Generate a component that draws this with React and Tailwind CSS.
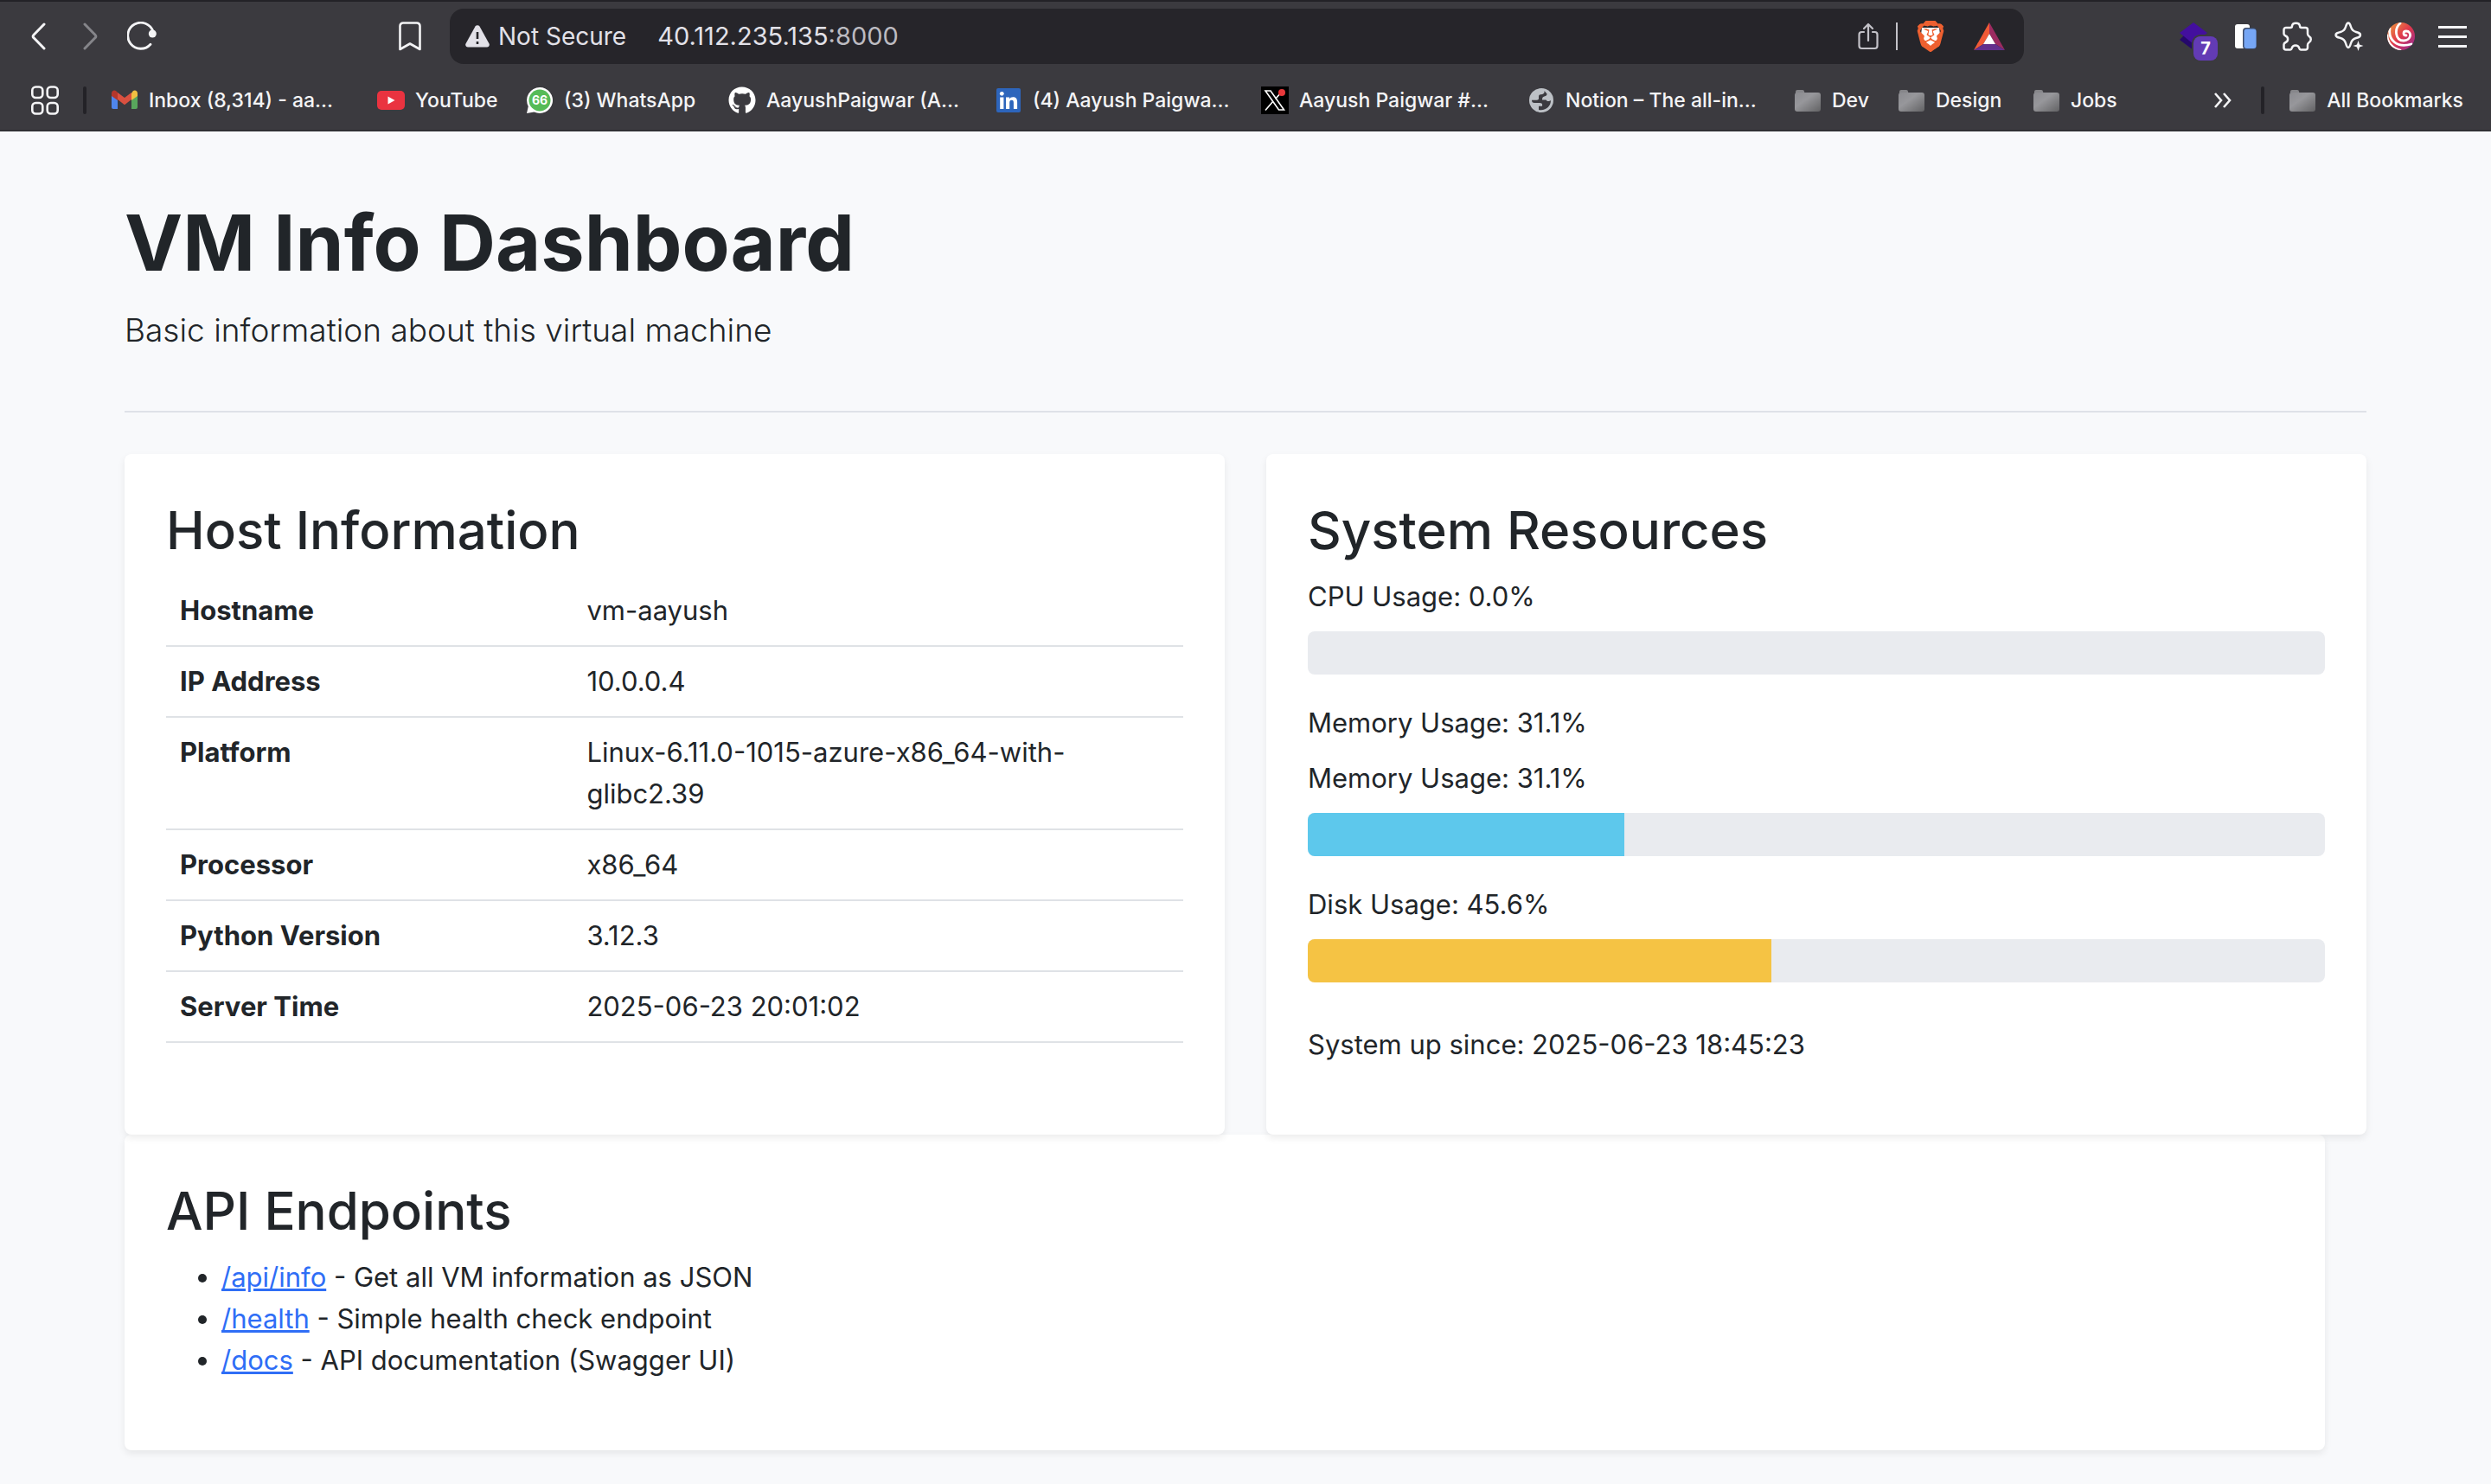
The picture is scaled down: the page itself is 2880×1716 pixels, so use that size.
import { FaGithub } from "react-icons/fa";
import { SiBrave } from "react-icons/si";

const bookmarks = [
  { label: "Inbox (8,314) - aa...", icon: GmailIcon, width: "w-[308px]" },
  { label: "YouTube", icon: YouTubeIcon, width: "w-[172px]" },
  { label: "(3) WhatsApp", icon: WhatsAppIcon, width: "w-[234px]" },
  { label: "AayushPaigwar (A...", icon: GithubIcon, width: "w-[308px]" },
  { label: "(4) Aayush Paigwa...", icon: LinkedInIcon, width: "w-[308px]" },
  { label: "Aayush Paigwar #...", icon: XIcon, width: "w-[308px]" },
  { label: "Notion – The all-in...", icon: GlobeIcon, width: "w-[308px]" },
  { label: "Dev", icon: FolderIcon, width: "w-[120px]" },
  { label: "Design", icon: FolderIcon, width: "w-[156px]" },
  { label: "Jobs", icon: FolderIcon, width: "w-[120px]" },
];

const hostRows = [
  ["Hostname", "vm-aayush"],
  ["IP Address", "10.0.0.4"],
  ["Platform", "Linux-6.11.0-1015-azure-x86_64-with-glibc2.39"],
  ["Processor", "x86_64"],
  ["Python Version", "3.12.3"],
  ["Server Time", "2025-06-23 20:01:02"],
];

const endpoints = [
  ["/api/info", "Get all VM information as JSON"],
  ["/health", "Simple health check endpoint"],
  ["/docs", "API documentation (Swagger UI)"],
];

function GmailIcon() {
  return (
    <svg viewBox="0 0 30 24" className="h-6 w-[30px]">
      <path d="M0 6v14a2 2 0 0 0 2 2h5V10z" fill="#4f86ec" />
      <path d="M30 6v14a2 2 0 0 1-2 2h-5V10z" fill="#58a55c" />
      <path d="M23 4v8l7-5V4c0-3.500-3.500-4.500-5.500-2.500z" fill="#f1bf42" />
      <path d="M7 11V3l8 6 8-6v8l-8 6.200z" fill="#d95040" />
      <path d="M0 4v3l7 5V3L5.500 1.500C3.500-.5 0 .5 0 4z" fill="#b5362b" />
    </svg>
  );
}

function YouTubeIcon() {
  return (
    <svg viewBox="0 0 32 22" className="h-[22px] w-8">
      <rect width="32" height="22" rx="5" fill="#ea3340" />
      <path d="M12.500 6.500v9l8-4.500z" fill="#fff" />
    </svg>
  );
}

function WhatsAppIcon() {
  return (
    <svg viewBox="0 0 32 32" className="size-8">
      <path d="M16 1a15 15 0 1 1-6.500 28.500L1 31l1.800-8A15 15 0 0 1 16 1z" fill="#fff" />
      <circle cx="16" cy="16" r="12.500" fill="#56bb57" />
      <text x="16" y="21" textAnchor="middle" fontSize="14" fontWeight="700" fontFamily="Inter, sans-serif" fill="#fff">66</text>
    </svg>
  );
}

function GithubIcon() {
  return <FaGithub className="size-8 text-white" />;
}

function LinkedInIcon() {
  return (
    <svg viewBox="0 0 28 28" className="size-7">
      <rect width="28" height="28" rx="2" fill="#2d65bc" />
      <g fill="#fff">
        <circle cx="6.300" cy="6.300" r="2.400" />
        <path d="M4.200 10.500h4.200V24H4.200zM11 10.500h4v1.900c.7-1.300 2.200-2.200 4.200-2.200 4 0 4.900 2.600 4.900 6.100V24h-4.200v-6.800c0-1.700-.1-3.500-2.300-3.500s-2.400 1.700-2.400 3.400V24H11z" />
      </g>
    </svg>
  );
}

function XIcon() {
  return (
    <svg viewBox="0 0 32 32" className="size-8">
      <rect width="32" height="32" fill="#000" />
      <path d="M5 5h6L26.500 27H20.500zM24 6l-7.500 8.500M5 27.500l9-10.500" fill="none" stroke="#fff" strokeWidth="1.600" />
      <circle cx="24" cy="7" r="4" fill="#e8383b" />
    </svg>
  );
}

function GlobeIcon() {
  return (
    <svg viewBox="0 0 28 28" className="size-7">
      <circle cx="14" cy="14" r="14" fill="#bdc1c6" />
      <path d="M17.500 3c.5 3-1 4-4 4.200-2.500.3-2.500 1.300-2.500 3.300 0 2 .5 3-2.500 3.200H3C3 16 4 17 6 17h6c2.500 0 3.500 1 3 3.700h-4v4.300c8 1.500 14-4 14-11-1.500 1-4 2-5.500-.5h-4.500c0-2.500.5-3.500 2.500-4s3-1 3-3z" fill="#3b3a3f" />
    </svg>
  );
}

function FolderIcon() {
  return (
    <svg viewBox="0 0 30 25" className="h-[25px] w-[30px]">
      <defs>
        <linearGradient id="folder" x1="0" y1="0" x2="1" y2="1">
          <stop offset="0" stopColor="#8b8b90" />
          <stop offset="0.400" stopColor="#97979b" />
          <stop offset="1" stopColor="#626264" />
        </linearGradient>
      </defs>
      <path d="M1 5V2a2 2 0 0 1 2-2h6a2 2 0 0 1 2 2l1 3z" fill="#86868a" />
      <rect y="3" width="30" height="22" rx="3" fill="url(#folder)" />
    </svg>
  );
}

function BraveIcon() {
  return (
    <svg viewBox="0 0 36 36" className="size-9">
      <path d="M8 8h20l1 8-4 10-7 6-7-6-4-10z" fill="#fff" />
      <SiBrave size="36" color="#ee6030" />
    </svg>
  );
}

function BatIcon() {
  return (
    <svg viewBox="0 0 36 32" className="h-8 w-9">
      <path d="M18 0 0 32l11-7 7-12z" fill="#f15a36" />
      <path d="M18 0v13l7 12 11 7z" fill="#9b2b60" />
      <path d="M0 32h36l-11-7H11z" fill="#63308c" />
      <path d="M18 13l-7 12h14z" fill="#fff" />
    </svg>
  );
}

function Toolbar() {
  return (
    <div className="flex items-center pt-2">
      <div className="flex flex-1 items-center pl-2">
        <button aria-label="Back" className="ml-7">
          <svg viewBox="0 0 18 32" className="h-8 w-[18px]" fill="none" stroke="#f4f4f6" strokeWidth="3" strokeLinecap="round" strokeLinejoin="round"><path d="M15 2 2.800 14.500a2 2 0 0 0 0 3L15 30" /></svg>
        </button>
        <button aria-label="Forward" className="ml-[42px]">
          <svg viewBox="0 0 18 32" className="h-8 w-[18px]" fill="none" stroke="#85858a" strokeWidth="3" strokeLinecap="round" strokeLinejoin="round"><path d="m2 2 12.200 12.500a2 2 0 0 1 0 3L2 30" /></svg>
        </button>
        <button aria-label="Reload" className="ml-[33px]">
          <svg viewBox="0 0 34 34" className="size-[34px]"><path d="M27 26.200A15 15 0 1 1 30 11.500" fill="none" stroke="#f4f4f6" strokeWidth="2.800" strokeLinecap="round" /><circle cx="29.300" cy="14" r="4.500" fill="#f4f4f6" /></svg>
        </button>
        <button aria-label="Bookmark this page" className="mr-[33px] ml-auto">
          <svg viewBox="0 0 26 34" className="h-[34px] w-[26px]" fill="none" stroke="#f4f4f6" strokeWidth="2.600" strokeLinejoin="round"><path d="M5 1.500h16a3.500 3.500 0 0 1 3.500 3.500v27L13 25.500 1.500 32V5A3.500 3.500 0 0 1 5 1.500z" /></svg>
        </button>
      </div>
      <div className="flex h-16 w-[1820px] items-center rounded-2xl bg-[#26252a] text-[28px] text-[#e2e1e8]">
        <svg viewBox="0 0 28 26" className="ml-[18px] h-[26px] w-7"><path d="M11.500 1.500a3 3 0 0 1 5 0l11 20c1 2-.5 4-2.500 4H3c-2 0-3.500-2-2.500-4z" fill="#e2e1e8" /><path d="M14 8v8M14 19v3" stroke="#26252a" strokeWidth="2.600" /></svg>
        <span className="ml-2.5">Not Secure</span>
        <span className="ml-9 text-[29px]">40.112.235.135<span className="text-[#bcbbc1]">:8000</span></span>
        <button aria-label="Share" className="ml-auto">
          <svg viewBox="0 0 24 32" className="h-8 w-6" fill="none" stroke="#c3c2c8" strokeWidth="2.200" strokeLinecap="round" strokeLinejoin="round"><path d="M7 11H4.500A3 3 0 0 0 1.500 14v13a3 3 0 0 0 3 3h15a3 3 0 0 0 3-3V14a3 3 0 0 0-3-3H17M12 21V2M7 7l5-5 5 5" /></svg>
        </button>
        <span className="mx-5 h-8 w-0.5 bg-[#c3c2c8]" />
        <BraveIcon />
        <span className="mr-[22px] ml-8"><BatIcon /></span>
      </div>
      <div className="flex flex-1 items-center justify-end pr-7">
        <span className="relative mr-5 flex w-11">
          <svg viewBox="0 0 44 32" className="h-8 w-11"><path d="M0 20 16 4l16 16-16 12z" fill="#25086b" /><path d="M16 0 32 12 16 25 0 12z" fill="#430f9e" /></svg>
          <span className="absolute top-4 left-4 flex size-7 items-center justify-center rounded-lg bg-[#633bb5] text-[20px] font-bold text-white ring-2 ring-[#3b3a3f]">7</span>
        </span>
        <svg viewBox="0 0 25 32" className="mr-[30px] h-8 w-[25px]"><rect y="2" width="17" height="28" rx="3" fill="#fff" /><rect x="9" y="6" width="16" height="25" rx="4" fill="#3c4a66" /><rect x="10.500" y="7.500" width="14" height="22.500" rx="3" fill="#76a6f5" /></svg>
        <svg viewBox="0 0 34 34" className="mr-[26px] size-[34px]" fill="none" stroke="#f4f4f6" strokeWidth="2.500" strokeLinejoin="round"><path d="M4 7h5c1.500 0 2-.8 2-2 .5-4.500 8.500-4.500 9 0 0 1.200.5 2 2 2h4.500A2.500 2.500 0 0 1 29 9.500V14c0 1.500.6 2.200 1.500 2.800 3 1.700 3 5.700 0 7.400-.9.600-1.500 1.300-1.500 2.800v3a2.500 2.500 0 0 1-2.500 2.500H21c-1.500 0-1.500-1-2-2.500-1-3.500-7-3.500-8 0-.5 1.500-.5 2.500-2 2.500H4A2.500 2.500 0 0 1 1.500 30v-3.500c0-1.500.7-1.900 2-2.500 3.500-1.500 3.500-6 0-7.500-1.300-.6-2-1-2-2.500V9.500A2.500 2.500 0 0 1 4 7z" /></svg>
        <svg viewBox="0 0 34 34" className="mr-[27px] size-[34px]"><path d="M16 1.500c1.500 0 2 1 3 4.500s2.500 5 6 6 5 1.500 5 3.500-1.500 2.500-5 3.500-5 2.500-6 6-1.500 5-3 5-2-1.500-3-5-2.500-5-6-6-5.500-1.500-5.500-3.500S3.500 13 7 12s5-2.500 6-6 1.500-4.500 3-4.500z" fill="none" stroke="#f4f4f6" strokeWidth="2.500" /><path d="M27.500 22l1.500 4.500L33.500 28 29 29.500 27.500 34 26 29.500 21.500 28l4.500-1.500z" fill="#f4f4f6" /></svg>
        <svg viewBox="0 0 32 32" className="mr-[27px] size-8">
          <defs>
            <linearGradient id="swirl" x1="0" y1="0" x2="1" y2="1"><stop offset="0" stopColor="#f0a03c" /><stop offset="0.500" stopColor="#e0384c" /><stop offset="1" stopColor="#8d2a9c" /></linearGradient>
            <clipPath id="disc"><circle cx="16" cy="16" r="16" /></clipPath>
          </defs>
          <g clipPath="url(#disc)">
            <rect width="32" height="32" fill="url(#swirl)" />
            <path d="M15 1C8 7 9 21 19 21c9 0 10-11 3-11-4 0-4 5 0 5M3 7C1 20 11 30 28 25M0 15c0 8 6 15 15 17" fill="none" stroke="#fff" strokeWidth="2.800" strokeLinecap="round" />
          </g>
        </svg>
        <button aria-label="Menu" className="flex w-[33px] flex-col gap-2"><i className="h-[3px] bg-[#f4f4f6]" /><i className="h-[3px] bg-[#f4f4f6]" /><i className="h-[3px] bg-[#f4f4f6]" /></button>
      </div>
    </div>
  );
}

function BookmarksBar() {
  return (
    <nav className="flex h-[76px] items-center pt-2 text-[23px] font-medium text-[#f4f4f6]">
      <button aria-label="Apps" className="ml-9">
        <svg viewBox="0 0 32 34" className="h-[34px] w-8" fill="none" stroke="#f4f4f6" strokeWidth="2.600"><rect x="1.300" y="1.500" width="12" height="12.500" rx="4" /><rect x="18.700" y="1.500" width="12" height="12.500" rx="4" /><rect x="1.300" y="20" width="12" height="12.500" rx="4" /><rect x="18.700" y="20" width="12" height="12.500" rx="4" /></svg>
      </button>
      <span className="mx-7 h-8 w-1 rounded-sm bg-[#232227]" />
      {bookmarks.map(({ label, icon: Icon, width }) => (
        <a key={label} href="#" className={"flex shrink-0 items-center gap-3 whitespace-nowrap " + width}>
          <span className="flex w-8 justify-center"><Icon /></span>
          {label}
        </a>
      ))}
      <button aria-label="More bookmarks" className="ml-auto">
        <svg viewBox="0 0 20 20" className="size-5" fill="none" stroke="#f4f4f6" strokeWidth="2.600"><path d="m1 2 7 8-7 8M11 2l7 8-7 8" /></svg>
      </button>
      <span className="mr-7 ml-[34px] h-8 w-1 rounded-sm bg-[#232227]" />
      <a href="#" className="mr-8 flex items-center gap-3 whitespace-nowrap"><span className="flex w-8 justify-center"><FolderIcon /></span>All Bookmarks</a>
    </nav>
  );
}

function Card({ title, className = "", children }) {
  return (
    <section className={"rounded-lg bg-white p-12 shadow-[0_4px_8px_rgba(0,0,0,0.075)] " + className}>
      <h2 className="mb-[13px] text-[60px] leading-[80px] font-medium">{title}</h2>
      {children}
    </section>
  );
}

function Meter({ label, value, color }) {
  return (
    <div className="mb-8">
      <p className="mb-4">{label}</p>
      <div role="progressbar" aria-label={label} aria-valuenow={value} className="h-[50px] overflow-hidden rounded-lg bg-[#e9ebef]">
        <div className={"h-full " + color} style={{ width: value + "%" }} />
      </div>
    </div>
  );
}

export default function App() {
  return (
    <div className="min-h-screen bg-[#f8f9fb] font-['Inter',sans-serif] text-[31px] leading-[48px] text-[#212529]">
      <header className="border-t-2 border-b-2 border-t-[#232227] border-b-[#303034] bg-[#3b3a3f]">
        <Toolbar />
        <BookmarksBar />
      </header>
      <main className="px-36 pt-[71px]">
        <div className="mb-12 border-b-2 border-[#dfe2e8] pb-[63px]">
          <h1 className="mb-3.5 text-[90px] leading-[115px] font-bold">VM Info Dashboard</h1>
          <p className="text-[37px] leading-[60px] font-light">Basic information about this virtual machine</p>
        </div>
        <div className="grid grid-cols-2 gap-12">
          <Card title="Host Information">
            <table className="w-full table-fixed border-collapse text-left">
              <tbody>
                {hostRows.map(([name, value]) => (
                  <tr key={name} className="border-b-2 border-[#dfe2e6] align-top">
                    <th scope="row" className="w-2/5 p-4 font-bold">{name}</th>
                    <td className="p-4">{value}</td>
                  </tr>
                ))}
              </tbody>
            </table>
          </Card>
          <Card title="System Resources">
            <Meter label="CPU Usage: 0.0%" value={0} color="bg-[#0d6efd]" />
            <p className="mb-4">Memory Usage: 31.1%</p>
            <Meter label="Memory Usage: 31.1%" value={31.1} color="bg-[#5dc8ec]" />
            <Meter label="Disk Usage: 45.6%" value={45.6} color="bg-[#f5c344]" />
            <p className="mt-12 mb-8">System up since: 2025-06-23 18:45:23</p>
          </Card>
        </div>
        <Card title="API Endpoints" className="mr-12">
          <ul className="mb-8 list-disc pl-16">
            {endpoints.map(([path, description]) => (
              <li key={path}><a href="#" className="text-[#2f6ef6] underline">{path}</a> - {description}</li>
            ))}
          </ul>
        </Card>
      </main>
    </div>
  );
}
